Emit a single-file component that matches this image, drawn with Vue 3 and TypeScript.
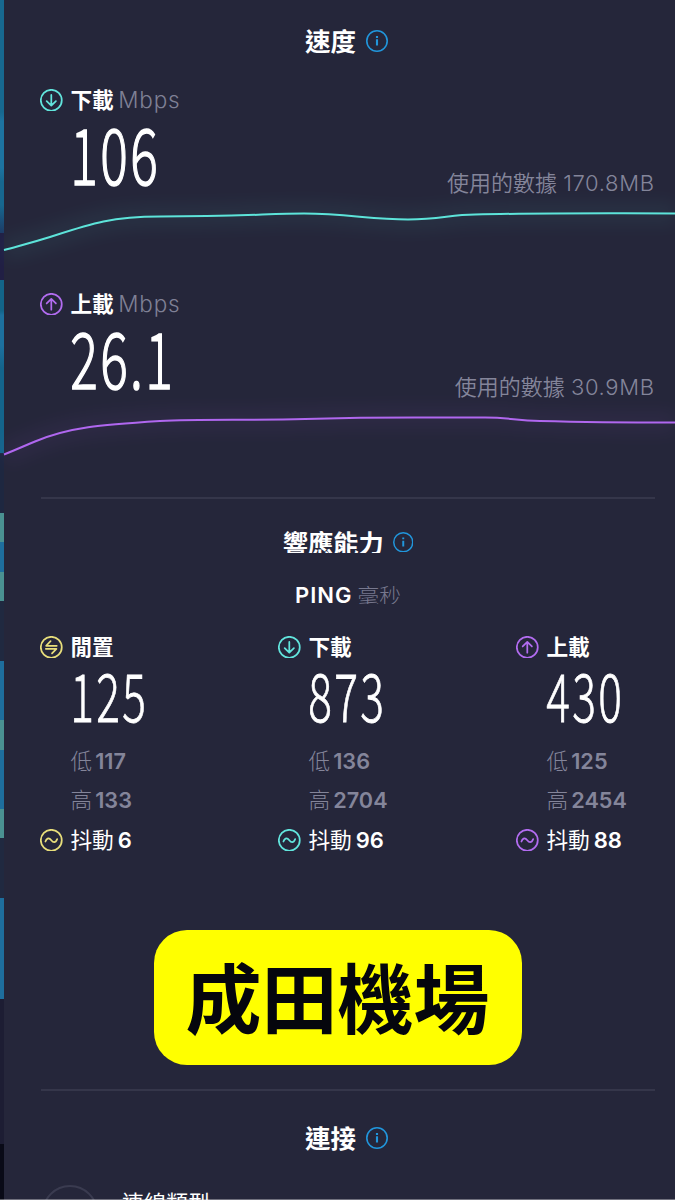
<script setup lang="ts">
type Kind = 'down' | 'up' | 'idle'

interface Speed {
  kind: Kind
  label: string
  value: string
  used: string
  path: string
}

interface Latency {
  kind: Kind
  label: string
  value: string
  low: string
  high: string
  jitter: string
}

const speeds: Speed[] = [
  {
    kind: 'down',
    label: '下載',
    value: '106',
    used: '170.8MB',
    path: 'M0 50 C20 44.500 32 41.500 46 37 C86 24 106 16.700 156 16.500 C236 16.500 266 13.600 300 13.600 C342 13.600 367 19.400 404 19.400 C436 19.400 446 14.700 471 14.500 C531 13 571 13.400 671 13.400',
  },
  {
    kind: 'up',
    label: '上載',
    value: '26.1',
    used: '30.9MB',
    path: 'M0 50.500 C15 44.500 20 42 31 37.500 C66 23 96 21 156 17 C196 15 246 16.500 301 15 C341 14 371 13.600 411 13.600 L481 13.600 C506 13.600 511 16.500 536 17 C586 18.300 606 18.500 671 18.500',
  },
]

const latencies: Latency[] = [
  { kind: 'idle', label: '閒置', value: '125', low: '117', high: '133', jitter: '6' },
  { kind: 'down', label: '下載', value: '873', low: '136', high: '2704', jitter: '96' },
  { kind: 'up', label: '上載', value: '430', low: '125', high: '2454', jitter: '88' },
]

const glyphs: Record<Kind, string> = {
  down: 'M11 5.800 V16 M6.500 11.800 L11 16.200 L15.500 11.800',
  up: 'M11 16.200 V6 M6.500 10.200 L11 5.800 L15.500 10.200',
  idle: 'M16.300 9.500 H6 L10.300 5 M5.700 12.500 H16 L11.700 17',
}

const wave = 'M5.300 12.200 C7 8 9.300 8.800 11 11 S15 14 16.700 9.800'

/** Centre of every digit; a decimal point takes half a cell. */
function cells(value: string, pitch: number): { ch: string; x: number }[] {
  let x = 0
  return [...value].map((ch) => {
    const width = ch === '.' ? pitch * 0.5 : pitch
    const cell = { ch, x: ch === '.' ? x + width * 0.5 - 2 : x + width * 0.5 - 2 }
    x += width
    return cell
  })
}
</script>

<template>
  <main class="page">
    <div class="strip">
      <i class="s1"></i><i class="s2"></i><i class="s3"></i><i class="s4"></i>
      <i class="teal"></i><i class="blue"></i><i class="teal"></i><i class="gap"></i>
      <i class="blue tall"></i><i class="teal"></i><i class="blue tall"></i><i class="teal"></i>
      <i class="gap"></i><i class="s5"></i><i class="s6"></i><i class="s7"></i>
    </div>

    <div class="panel">
      <h2 class="title">
        <span>速度</span>
        <svg class="info" viewBox="0 0 22 22"><circle cx="11" cy="11" r="10.200" /><path d="M11 9.300 V15.500 M11 6 V7.900" /></svg>
      </h2>

      <section v-for="s in speeds" :key="s.kind" class="speed" :class="s.kind">
        <div class="label">
          <svg class="icon" viewBox="0 0 22 22"><circle cx="11" cy="11" r="10.200" /><path :d="glyphs[s.kind]" /></svg>
          <b>{{ s.label }}</b><span class="unit">Mbps</span>
        </div>
        <div class="reading">
          <svg class="figure large" width="110" height="66">
            <g v-for="(c, i) in cells(s.value, 30)" :key="i" :transform="`translate(${c.x} 60.500) scale(0.660 1)`">
              <text>{{ c.ch }}</text>
            </g>
          </svg>
          <p class="used">使用的數據 <span>{{ s.used }}</span></p>
        </div>
        <svg class="chart" width="671" height="76" viewBox="0 0 671 76">
          <path class="glow" :d="s.path" />
          <path class="line" :d="s.path" />
        </svg>
      </section>

      <hr />

      <h2 class="title response">
        <span>響應能力</span>
        <svg class="info" viewBox="0 0 22 22"><circle cx="11" cy="11" r="10.200" /><path d="M11 9.300 V15.500 M11 6 V7.900" /></svg>
      </h2>
      <div class="ping"><b>PING</b><span>毫秒</span></div>

      <div class="latencies">
        <section v-for="l in latencies" :key="l.kind" class="latency" :class="l.kind">
          <div class="label">
            <svg class="icon" viewBox="0 0 22 22"><circle cx="11" cy="11" r="10.200" /><path :d="glyphs[l.kind]" /></svg>
            <b>{{ l.label }}</b>
          </div>
          <svg class="figure small" width="90" height="58">
            <g v-for="(c, i) in cells(l.value, 26)" :key="i" :transform="`translate(${c.x} 53.500) scale(0.660 1)`">
              <text>{{ c.ch }}</text>
            </g>
          </svg>
          <p class="bound">低<span>{{ l.low }}</span></p>
          <p class="bound">高<span>{{ l.high }}</span></p>
          <div class="label jitter">
            <svg class="icon" viewBox="0 0 22 22"><circle cx="11" cy="11" r="10.200" /><path :d="wave" /></svg>
            <em>抖動</em><span>{{ l.jitter }}</span>
          </div>
        </section>
      </div>

      <hr class="second" />

      <h2 class="title connection">
        <span>連接</span>
        <svg class="info" viewBox="0 0 22 22"><circle cx="11" cy="11" r="10.200" /><path d="M11 9.300 V15.500 M11 6 V7.900" /></svg>
      </h2>
      <div class="kind-row"><i></i><span>連線類型</span></div>
    </div>

    <div class="badge">成田機場</div>
    <div class="edge"></div>
  </main>
</template>

<style>
body {
  margin: 0;
  background: #25263a;
}
</style>

<style scoped>
* {
  box-sizing: border-box;
}
.page {
  position: relative;
  display: flex;
  width: 675px;
  height: 1200px;
  overflow: hidden;
  background: #25263a;
  color: #fff;
  font-family: Inter, "Noto Sans CJK TC", sans-serif;
}
.strip {
  display: flex;
  flex-direction: column;
  width: 4px;
  flex: none;
}
.strip i { display: block; flex: none; height: 29.500px; }
.strip .s1 { height: 233px; background: linear-gradient(#17688f, #17688f 48%, #1d73a0 52%, #1d73a0 72%, #17678f 78%, #17678f 88%, #1d3b66); }
.strip .s2 { height: 47px; background: #211f44; }
.strip .s3 { height: 88px; background: linear-gradient(#136489 35%, #1d709e 40%, #1d709e 75%, #14648b); }
.strip .s4 { height: 144.500px; background: linear-gradient(#14648b 58.500%, #1e2740 59%); }
.strip .teal { background: #4a9191; }
.strip .blue { background: #1e6e9d; }
.strip .tall { height: 59.200px; }
.strip .gap { height: 60px; background: #202940; }
.strip .s5 { height: 101px; background: #1e6e9d; }
.strip .s6 { height: 145px; background: #1d1d33; }
.strip .s7 { height: 60px; background: #090a17; }

.panel {
  width: 671px;
  flex: none;
}
.title {
  display: flex;
  align-items: center;
  justify-content: center;
  gap: 10px;
  width: 614px;
  height: 82px;
  margin: 0 0 0 35.500px;
  font-size: 25.500px;
  font-weight: 700;
  line-height: 36px;
}
.title span { padding-top: 2px; }
.info {
  width: 22px;
  height: 22px;
  flex: none;
  fill: none;
  stroke: #2196dc;
  stroke-width: 1.600;
}
.info path { stroke-width: 2.100; }
.icon {
  width: 22.600px;
  height: 22.600px;
  flex: none;
  margin-right: 7.400px;
  fill: none;
  stroke: currentColor;
  stroke-width: 1.700;
  stroke-linecap: round;
  stroke-linejoin: round;
}
.down .icon { color: #62e5dd; }
.up .icon { color: #b26cf0; }
.idle .icon { color: #e8de7b; }

.speed { height: 204px; }
.label {
  display: flex;
  align-items: center;
  height: 36px;
  padding-left: 36.400px;
  font-size: 21.700px;
  line-height: 30px;
  white-space: nowrap;
}
.label b { font-weight: 700; }
.unit {
  margin-left: 4.500px;
  color: #7f8095;
  font-size: 22.500px;
  font-weight: 300;
  letter-spacing: 0.800px;
}
.reading {
  display: flex;
  justify-content: space-between;
  height: 82px;
  padding: 6px 21px 0 67px;
}
.figure {
  display: block;
  overflow: visible;
  fill: #fff;
  stroke: #fff;
  font-family: "Noto Sans CJK TC", sans-serif;
  font-weight: 300;
  text-anchor: middle;
}
.large { font-size: 78px; stroke-width: 1.500px; }
.small { font-size: 67px; stroke-width: 0.800px; }
.used {
  margin: 43px 0 0;
  height: 32px;
  color: #84859a;
  font-size: 22px;
  font-weight: 350;
  line-height: 32px;
  white-space: nowrap;
}
.used span { letter-spacing: 0.650px; margin-right: -0.600px; }
.chart {
  display: block;
  overflow: visible;
  fill: none;
}
.line { stroke-width: 2; }
.glow { stroke-width: 24; opacity: 0.050; filter: blur(8px); }
.down .chart { stroke: #5de4da; }
.up .chart { stroke: #b067ef; }

hr {
  width: 614px;
  height: 2px;
  margin: 7px 0 0 37px;
  border: 0;
  background: #35364a;
}
.title.response {
  height: 24px;
  margin: 31px 0 0 37px;
  gap: 9px;
}
.response span {
  height: 21.500px;
  padding: 0;
  overflow: hidden;
  line-height: 25px;
  font-size: 25.300px;
}
.response .info { width: 20.500px; height: 20.500px; }
.ping {
  display: flex;
  justify-content: center;
  align-items: center;
  gap: 6px;
  width: 614px;
  height: 20px;
  margin: 31px 0 0 37px;
  font-size: 22px;
}
.ping b { font-weight: 600; line-height: 20px; letter-spacing: 1px; margin-right: -1px; }
.ping span {
  height: 18px;
  overflow: hidden;
  color: #77788e;
  font-size: 21.700px;
  font-weight: 300;
  line-height: 20px;
}
.latencies {
  display: grid;
  grid-template-columns: repeat(3, 238px);
  margin-top: 24px;
}
.small { margin: 3px 0 0 67px; height: 58px; }
.bound {
  margin: 0 0 0 66.500px;
  height: 39.500px;
  color: #84859a;
  font-size: 21.700px;
  font-weight: 300;
  line-height: 39.500px;
}
.small + .bound { margin-top: 15.500px; }
.bound span { margin-left: 3px; font-weight: 600; }
.jitter { height: 39px; }
.jitter em { font-style: normal; font-weight: 400; }
.jitter span { margin-left: 4px; font-weight: 600; font-size: 22px; }
.second { margin-top: 229.500px; }
.title.connection {
  height: 40px;
  margin-top: 27px;
}
.kind-row {
  display: flex;
  align-items: flex-start;
  height: 42px;
  padding-left: 38px;
  margin-top: 27px;
}
.kind-row i {
  width: 56px;
  height: 56px;
  flex: none;
  border: 2.500px solid #3a3b50;
  border-radius: 50%;
}
.kind-row span {
  margin: 2px 0 0 24px;
  font-size: 22px;
  line-height: 32px;
}
.badge {
  position: absolute;
  left: 153.500px;
  top: 930px;
  width: 368px;
  height: 135px;
  border-radius: 33px;
  background: #ff0;
  color: #05060d;
  font-family: "Noto Sans CJK TC", sans-serif;
  font-size: 76px;
  font-weight: 700;
  line-height: 131px;
  text-align: center;
}
.edge {
  position: absolute;
  left: 0;
  bottom: 0;
  width: 100%;
  height: 1px;
  background: #fff;
  opacity: 0.350;
}
</style>
